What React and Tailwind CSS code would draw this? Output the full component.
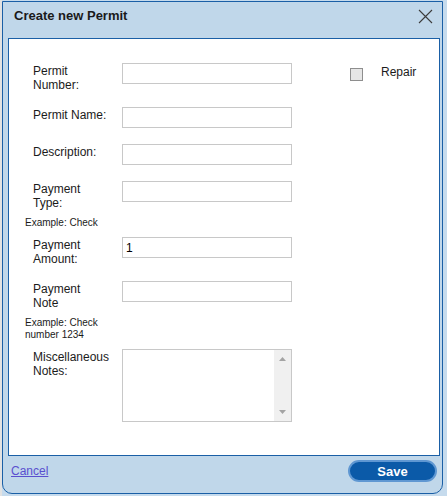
import React from 'react';

const font = { fontFamily: '"Liberation Sans", Arial, sans-serif' };

const Field = ({ label, rowClass, children }) => (
  <div className={`flex items-start ${rowClass}`}>
    <div className="w-[113px] pl-[24px] pt-[1px] text-[12px] leading-[14px] text-[#1b1b1b] whitespace-nowrap">
      {label}
    </div>
    {children}
  </div>
);

const TextBox = ({ value }) => (
  <input
    type="text"
    defaultValue={value}
    className="w-[170px] h-[21px] border border-[#c8c8c8] bg-white px-[3px] text-[12px] text-black outline-none"
    style={font}
  />
);

const Example = ({ children, className }) => (
  <div className={`pl-[16px] text-[10px] leading-[12px] text-[#1b1b1b] ${className}`}>{children}</div>
);

export default function App() {
  return (
    <div className="w-[447px] h-[496px] bg-[#c6dbed] border-l-2 border-[#e2e2e2] pt-[1px]" style={font}>
      <div className="w-[441px] h-[493px] bg-[#c0d7ea] border border-[#1a5fa6] rounded-b-[10px] flex flex-col">
        {/* title bar */}
        <div className="h-[36px] flex items-start justify-between pl-[11px] pr-[9px] pt-[6px]">
          <span className="text-[13px] leading-[16px] font-bold text-[#1a1a1a]">Create new Permit</span>
          <button className="mt-[1px] text-[#3c3c3c]">
            <svg width="15" height="15" viewBox="0 0 15 15" fill="none" stroke="currentColor" strokeWidth="1.1">
              <path d="M1 1 L14 14 M14 1 L1 14" />
            </svg>
          </button>
        </div>

        {/* form panel */}
        <div className="ml-[5px] mr-[2px] bg-white border border-[#1a5fa6] flex pt-[24px] pb-[33px]">
          <div className="w-[283px] flex flex-col">
            <Field rowClass="mb-[15px]" label={<>Permit<br />Number:</>}>
              <TextBox />
            </Field>
            <Field rowClass="mb-[16px]" label="Permit Name:">
              <TextBox />
            </Field>
            <Field rowClass="mb-[16px]" label="Description:">
              <TextBox />
            </Field>
            <Field rowClass="" label={<>Payment<br />Type:</>}>
              <TextBox />
            </Field>
            <Example className="mt-[7px] mb-[8px]">Example: Check</Example>
            <Field rowClass="mb-[15px]" label={<>Payment<br />Amount:</>}>
              <TextBox value="1" />
            </Field>
            <Field rowClass="" label={<>Payment<br />Note</>}>
              <TextBox />
            </Field>
            <Example className="mt-[7px] mb-[8px]">Example: Check<br />number 1234</Example>
            <Field rowClass="" label={<>Miscellaneous<br />Notes:</>}>
              <div className="w-[170px] h-[73px] border border-[#c8c8c8] flex">
                <textarea className="flex-1 h-full resize-none outline-none text-[12px] overflow-hidden" style={font} />
                <div className="w-[17px] h-full bg-[#f0f0f0] flex flex-col items-center justify-between py-[7px]">
                  <svg width="7" height="4" viewBox="0 0 7 4"><path d="M0 4 L3.5 0 L7 4 Z" fill="#a3a3a3" /></svg>
                  <svg width="7" height="4" viewBox="0 0 7 4"><path d="M0 0 L3.5 4 L7 0 Z" fill="#a3a3a3" /></svg>
                </div>
              </div>
            </Field>
          </div>
          <div className="ml-[58px] flex items-start">
            <div className="mt-[5px] w-[13px] h-[13px] border border-[#8e8e8e] bg-[#e6e6e6]" />
            <span className="ml-[18px] mt-[2px] text-[12px] leading-[14px] text-[#1b1b1b]">Repair</span>
          </div>
        </div>

        {/* footer */}
        <div className="flex items-center justify-between pl-[8px] pr-[5px] pt-[4px]">
          <a href="#" className="text-[12px] text-[#5a4fcf] underline">Cancel</a>
          <button className="w-[89px] h-[22px] rounded-full bg-[#0b5aa8] border-2 border-[#5f97d2] text-white text-[13px] font-bold leading-none">
            Save
          </button>
        </div>
      </div>
    </div>
  );
}
